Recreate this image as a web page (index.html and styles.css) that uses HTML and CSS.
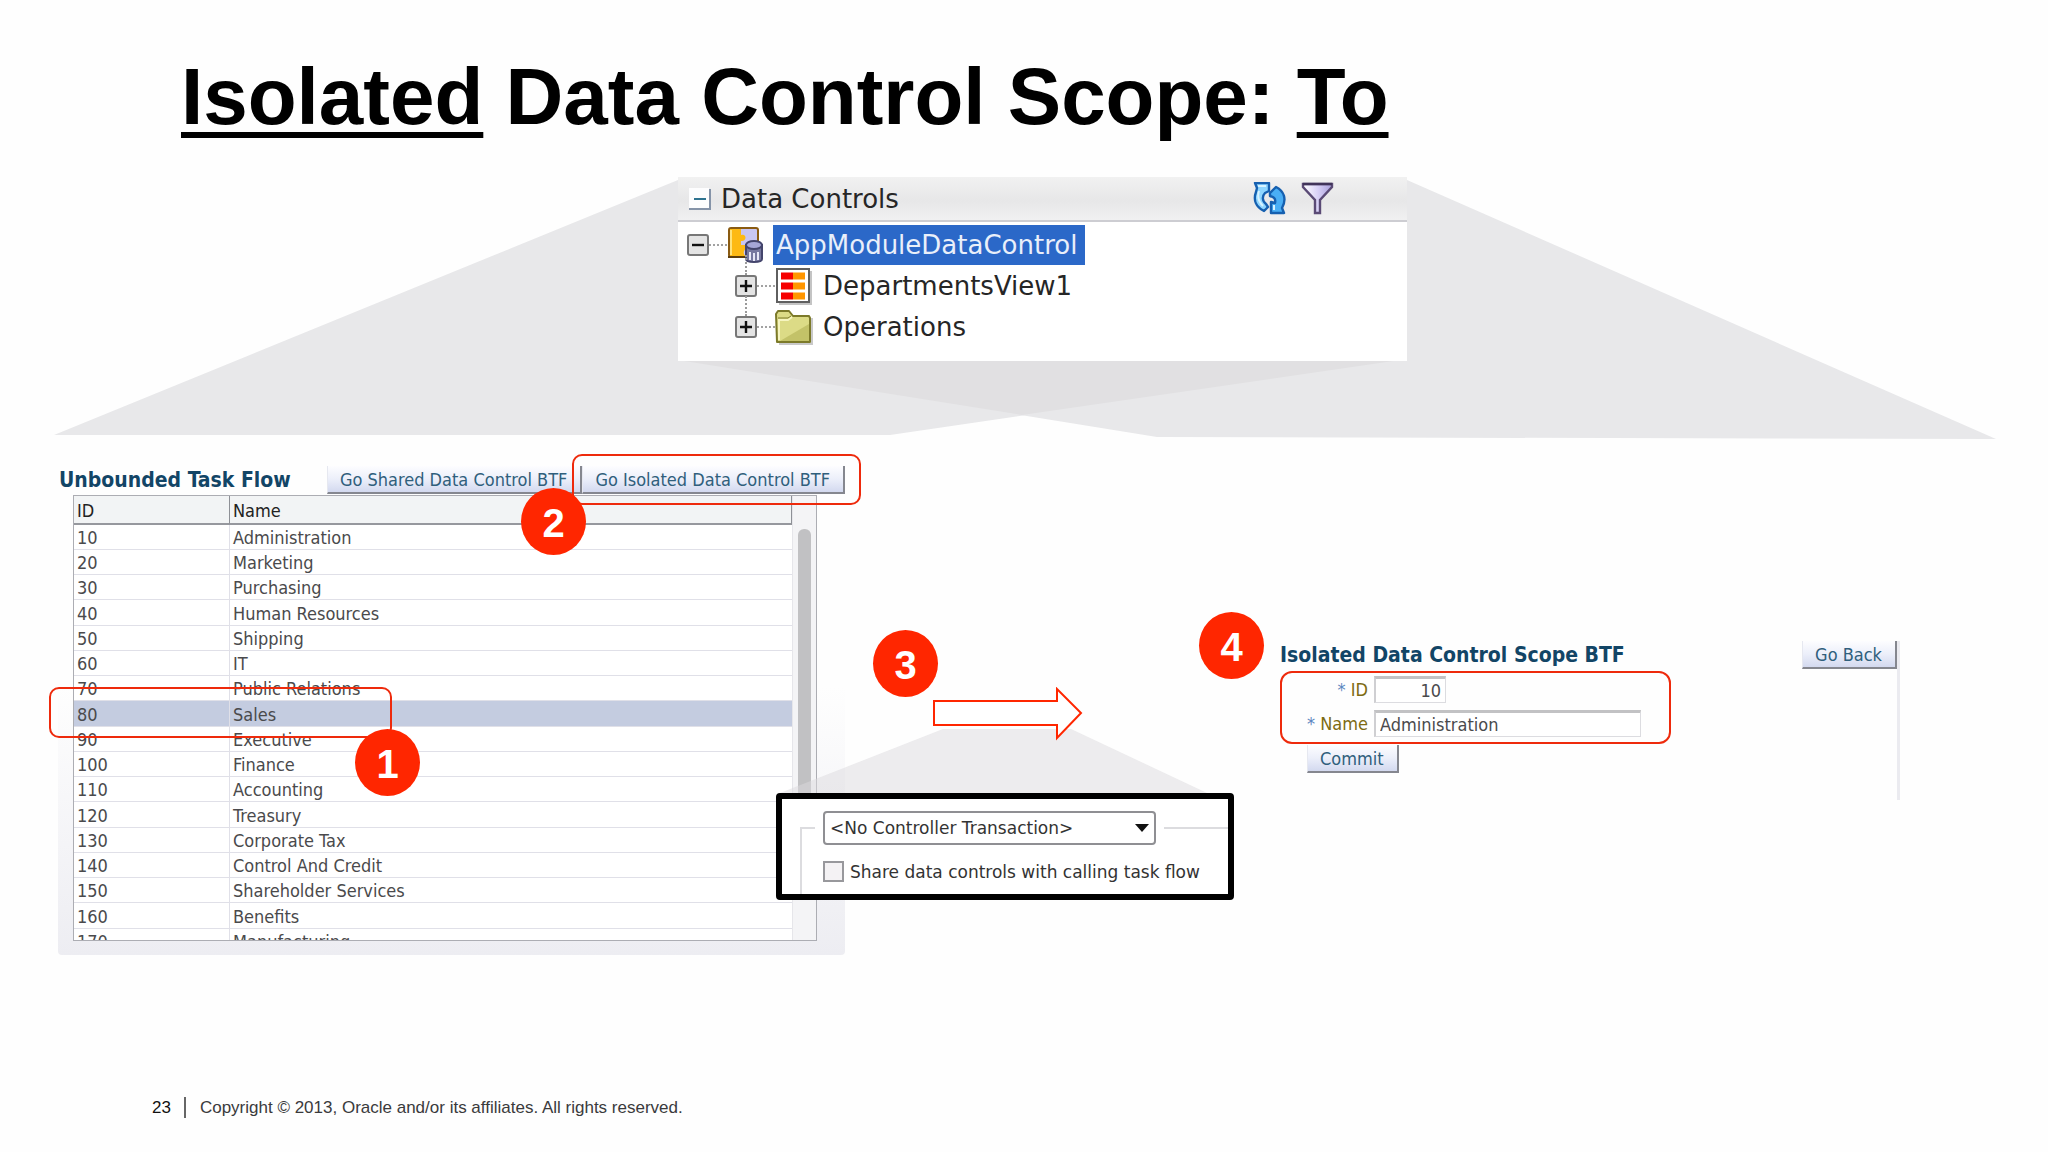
FILE: index.html
```html
<!DOCTYPE html>
<html lang="en">
<head>
<meta charset="utf-8">
<meta name="viewport" content="width=device-width, initial-scale=1">
<title>Isolated Data Control Scope: To</title>
<link rel="stylesheet" href="styles.css">
</head>
<body>
<h1 class="title"><u>Isolated</u> Data Control Scope: <u>To</u></h1>

<main class="stage">
  <svg class="beams" viewBox="0 0 2048 300" preserveAspectRatio="none" aria-hidden="true">
    <polygon points="678,37 54,292 890,292 1407,216 1407,37"/>
    <polygon points="1407,37 1996,296 1157,294 678,217 678,37"/>
    <polygon class="beam-overlap" points="678,217 1407,216 1022,272"/>
  </svg>

  <div class="source-row">
    <section class="controls">
      <header class="controls-head">
        <svg class="collapse" viewBox="0 0 22 22" aria-hidden="true">
          <rect width="20" height="20" fill="#fdfdfe"/>
          <path d="M0 21H21V1" fill="none" stroke="#8593a8" stroke-width="2"/>
          <path d="M5 11H17" stroke="#2f7390" stroke-width="2"/>
        </svg>
        <h2 class="controls-title">Data Controls</h2>
        <svg class="tool" viewBox="0 0 34 34" aria-hidden="true">
          <g fill="#8fd6ff" stroke="#1660b0" stroke-width="2.4" stroke-linejoin="round">
            <path d="M2 1H16V9L12 11C9 14 9 19 13 22L15 25L11 29C3 25 0 18 3 10L4 6Z"/>
            <path d="M17 11L23 5C31 9 34 17 29 26L31 31H18V20L22 21C23 17 21 15 17 14Z" fill="#4aaef5"/>
          </g>
          <path d="M5 4H13M6 9C4 15 6 20 10 24M21 23V28" fill="none" stroke="#d7f3ff" stroke-width="2"/>
        </svg>
        <svg class="tool" viewBox="0 0 34 34" aria-hidden="true">
          <defs><linearGradient id="cone"><stop offset="0" stop-color="#fff"/><stop offset=".5" stop-color="#d9d2f7"/><stop offset="1" stop-color="#a99fdc"/></linearGradient></defs>
          <path d="M2 2H31V5L19 18V31H14V18L2 5Z" fill="url(#cone)" stroke="#5a4a75" stroke-width="2.4"/>
          <path d="M2 2H31" stroke="#41345a" stroke-width="2.4"/>
        </svg>
      </header>
      <ul class="tree">
        <li class="node node-root">
          <svg class="toggle" viewBox="0 0 22 22" aria-hidden="true"><rect x="1" y="1" width="20" height="20" rx="2" fill="#e4e4e4" stroke="#777" stroke-width="2"/><path d="M5 11H17" stroke="#111" stroke-width="2.4"/></svg>
          <span class="dots"></span>
          <svg class="node-icon" viewBox="0 0 38 38" aria-hidden="true">
            <rect x="2" y="2" width="29" height="29" rx="2" fill="#c9c6f2" stroke="#8a5b12" stroke-width="2"/>
            <path d="M3 3H14V9C20 7 20 16 14 15V19H19V23C16 24 16 29 19 30H3Z" fill="#fdb913"/>
            <path d="M4 4V29" stroke="#ffe27a" stroke-width="2"/>
            <path d="M1 31H30" stroke="#5c3d0c" stroke-width="2"/>
            <path d="M19 19V33C19 37 35 37 35 33V19Z" fill="#77789f" stroke="#44456c" stroke-width="2"/>
            <ellipse cx="27" cy="19" rx="8" ry="4" fill="#a5a6d6" stroke="#44456c" stroke-width="2"/>
            <path d="M23 26V34M27 27V35M31 26V34" stroke="#e6e6f6" stroke-width="2"/>
          </svg>
          <span class="node-text selected">AppModuleDataControl</span>
        </li>
        <li class="node node-child">
          <svg class="toggle" viewBox="0 0 22 22" aria-hidden="true"><rect x="1" y="1" width="20" height="20" rx="2" fill="#e4e4e4" stroke="#777" stroke-width="2"/><path d="M5 11H17M11 5V17" stroke="#111" stroke-width="2.4"/></svg>
          <span class="dots"></span>
          <svg class="node-icon" viewBox="0 0 38 38" aria-hidden="true">
            <path d="M4 37H36V4" fill="none" stroke="#c4c4c4" stroke-width="2"/>
            <rect x="2" y="2" width="32" height="33" fill="#fff" stroke="#5f5f5f" stroke-width="2"/>
            <path d="M6 9H18M6 19H18M6 29H18" stroke="#f60000" stroke-width="7"/>
            <path d="M18 9H30M18 19H30M18 29H30" stroke="#ff9500" stroke-width="7"/>
          </svg>
          <span class="node-text">DepartmentsView1</span>
        </li>
        <li class="node node-child">
          <svg class="toggle" viewBox="0 0 22 22" aria-hidden="true"><rect x="1" y="1" width="20" height="20" rx="2" fill="#e4e4e4" stroke="#777" stroke-width="2"/><path d="M5 11H17M11 5V17" stroke="#111" stroke-width="2.4"/></svg>
          <span class="dots"></span>
          <svg class="node-icon" viewBox="0 0 38 38" aria-hidden="true">
            <path d="M4 36H37V10" fill="none" stroke="#c9c9c9" stroke-width="2"/>
            <path d="M1 6L3 3H14L18 8H34L35 10V34H2Z" fill="#dcdb86" stroke="#7c7a2a" stroke-width="2" stroke-linejoin="round"/>
            <path d="M5 33L34 16V33Z" fill="#c3c268"/>
            <path d="M3 12H13L17 9M4 13V32" fill="none" stroke="#f6f5c0" stroke-width="2"/>
            <path d="M3 10H13L16 8" fill="none" stroke="#7c7a2a"/>
          </svg>
          <span class="node-text">Operations</span>
        </li>
      </ul>
    </section>
  </div>

  <div class="flow-row">
    <section class="unbounded">
      <header class="panel-head">
        <h2 class="panel-title">Unbounded Task Flow</h2>
        <button class="btn" type="button">Go Shared Data Control BTF</button>
        <button class="btn" type="button">Go Isolated Data Control BTF</button>
        <span class="mark mark-button"></span>
        <span class="badge badge-two">2</span>
      </header>
      <div class="grid-box">
        <table class="grid">
          <thead><tr><th class="col-id" scope="col">ID</th><th scope="col">Name</th></tr></thead>
          <tbody>
            <tr><td>10</td><td>Administration</td></tr>
            <tr><td>20</td><td>Marketing</td></tr>
            <tr><td>30</td><td>Purchasing</td></tr>
            <tr><td>40</td><td>Human Resources</td></tr>
            <tr><td>50</td><td>Shipping</td></tr>
            <tr><td>60</td><td>IT</td></tr>
            <tr><td>70</td><td>Public Relations</td></tr>
            <tr class="current"><td>80</td><td>Sales</td></tr>
            <tr><td>90</td><td>Executive</td></tr>
            <tr><td>100</td><td>Finance</td></tr>
            <tr><td>110</td><td>Accounting</td></tr>
            <tr><td>120</td><td>Treasury</td></tr>
            <tr><td>130</td><td>Corporate Tax</td></tr>
            <tr><td>140</td><td>Control And Credit</td></tr>
            <tr><td>150</td><td>Shareholder Services</td></tr>
            <tr><td>160</td><td>Benefits</td></tr>
            <tr><td>170</td><td>Manufacturing</td></tr>
          </tbody>
        </table>
        <div class="scroll"><div class="thumb"></div></div>
      </div>
      <span class="mark mark-row"></span>
      <span class="badge badge-one">1</span>
    </section>

    <section class="step">
      <span class="badge badge-three">3</span>
      <svg class="arrow" viewBox="0 0 458 106" preserveAspectRatio="none" aria-hidden="true">
        <polygon points="167,42 295,42 431,106 4,106" fill="#dcdadd" fill-opacity=".5"/>
        <polygon points="158,14 281,14 281,2 305,26 281,51 281,38 158,38" fill="#fff" stroke="#ff2600" stroke-width="2"/>
      </svg>
      <form class="options">
        <fieldset class="group">
          <legend class="group-legend">
            <select class="transaction" aria-label="Transaction"><option>&lt;No Controller Transaction&gt;</option></select>
          </legend>
          <label class="share"><input class="check" type="checkbox">Share data controls with calling task flow</label>
        </fieldset>
      </form>
    </section>

    <section class="isolated">
      <header class="panel-head isolated-head">
        <h2 class="panel-title">Isolated Data Control Scope BTF</h2>
        <button class="btn" type="button">Go Back</button>
      </header>
      <form class="edit">
        <div class="fields">
          <label class="field-label" for="dept-id"><span class="star">*</span> ID</label>
          <input class="field field-id" id="dept-id" type="text" value="10">
          <label class="field-label" for="dept-name"><span class="star">*</span> Name</label>
          <input class="field" id="dept-name" type="text" value="Administration">
        </div>
        <button class="btn commit" type="button">Commit</button>
      </form>
      <span class="badge badge-four">4</span>
    </section>
  </div>
</main>

<footer class="foot">
  <span class="page">23</span>
  <span class="legal">Copyright © 2013, Oracle and/or its affiliates. All rights reserved.</span>
</footer>
</body>
</html>
```

FILE: styles.css
```css
* { box-sizing: border-box; }

body {
  margin: 0;
  min-height: 100vh;
  display: flex;
  flex-direction: column;
  background: #fefefe;
  font-family: "DejaVu Sans Condensed", "DejaVu Sans", sans-serif;
  font-size: 18px;
  color: #4a4a4c;
}

button, input, select { font: inherit; color: inherit; }

.title {
  margin: 0;
  padding: 51px 0 0 181px;
  font: bold 80px/92px "Liberation Sans", Arial, sans-serif;
  color: #000;
}

.title u {
  text-decoration-thickness: 6px;
  text-underline-offset: 8px;
  text-decoration-skip-ink: none;
}

.stage { position: relative; padding-top: 34px; }

/* Projection wedges behind the panels */
.beams {
  position: absolute;
  top: 0;
  left: 0;
  z-index: -1;
  width: 100%;
  height: 300px;
  fill: #e8e8ea;
}
.beam-overlap { fill: #e1e0e2; }

.source-row {
  display: grid;
  grid-template-columns: 678fr 729fr 641fr;
}

.controls {
  grid-column: 2;
  min-height: 184px;
  background: #fff;
  font-family: "DejaVu Sans", sans-serif;
  color: #262626;
}

.controls-head {
  display: flex;
  align-items: center;
  height: 45px;
  padding: 0 72px 0 11px;
  border-bottom: 2px solid #cdcdd2;
  background: linear-gradient(#f1f1f1, #e7e7e8 55%, #f0f0f1);
}

.collapse { width: 22px; height: 22px; margin-right: 10px; }
.controls-title { margin: 0 auto 0 0; font-size: 26px; font-weight: normal; }
.tool { width: 34px; height: 34px; margin-left: 14px; }

.tree { margin: 0; padding: 2px 0 0 9px; list-style: none; }

.node { position: relative; display: flex; align-items: center; height: 41px; }
.node-child { padding-left: 48px; }
.node-child::before {
  content: "";
  position: absolute;
  left: 58px;
  top: -10px;
  height: 20px;
  border-left: 2px dotted #9a9a9a;
}
.toggle { width: 22px; height: 22px; }
.dots { width: 18px; border-top: 2px dotted #a2a2a2; }
.node-icon { width: 38px; height: 38px; margin-right: 8px; }
.node-child .node-icon { margin-right: 10px; }
.node-text { font-size: 26px; line-height: 40px; }
.selected { padding: 0 8px 0 3px; background: #2b68c8; color: #e9effa; }

/* Columns overlap: the option box sits across the edge of the table */
.flow-row {
  display: grid;
  grid-template-columns: 58fr 718fr 69fr 389fr 46fr 620fr 148fr;
  align-items: start;
  margin-top: 93px;
}

.unbounded {
  position: relative;
  grid-column: 2 / 4;
  grid-row: 1;
  margin-top: 12px;
  padding-bottom: 14px;
  border-radius: 4px;
  background: linear-gradient(#fefefe 45%, #ededf2);
}

.panel-head { position: relative; display: flex; height: 29px; padding-left: 1px; }
.panel-title {
  margin: 0 auto 0 0;
  font-size: 21px;
  line-height: 29px;
  color: #124566;
}

.btn {
  height: 28px;
  padding: 0 13px 0 12px;
  border: 0;
  border-right: 2px solid #85878f;
  border-bottom: 2px solid #85878f;
  border-left: 1px solid #e6e8f0;
  background: linear-gradient(#fdfdff, #eceffa 50%, #d3d9ef);
  color: #305f7c;
  white-space: nowrap;
}

.grid-box {
  display: flex;
  height: 446px;
  margin: 0 28px 0 15px;
  border: 1px solid #acadb3;
  overflow: hidden;
  background: #fff;
}

.grid { flex: 1; border-spacing: 0; table-layout: fixed; height: max-content; }
.grid th, .grid td { padding: 1px 3px 0; text-align: left; white-space: nowrap; }
.grid th {
  height: 29px;
  border-right: 1px solid #8e9096;
  border-bottom: 2px solid #96989e;
  background: #f2f4f5;
  font-weight: normal;
  color: #222;
}
.col-id { width: 156px; }
.grid td { height: 25px; border-bottom: 1px solid #e0e0e8; line-height: 23px; }
.grid tr:nth-child(4n) td { height: 26px; }
.grid td:first-child { border-right: 1px solid #e0e0e8; }
.current td { background: #c4cce0; }

.scroll { width: 24px; padding: 33px 5px 0; border-left: 1px solid #e6e6ea; background: #f4f4f6; }
.thumb { height: 340px; border-radius: 6px; background: #c1c1c3; }

/* Numbered callouts */
.mark { position: absolute; border: 2px solid #ee2a0c; border-radius: 10px; }
.mark-button { top: -12px; right: -16px; width: 289px; height: 51px; }
.mark-row { top: 221px; left: -9px; width: 343px; height: 51px; }

.badge {
  display: flex;
  align-items: center;
  justify-content: center;
  width: 65px;
  height: 67px;
  padding-top: 2px;
  border-radius: 50%;
  background: #ff2600;
  color: #fff;
  font: bold 40px/1 "Liberation Sans", Arial, sans-serif;
}
.badge-one { position: absolute; top: 263px; left: 297px; }
.badge-two { position: absolute; top: 22px; right: 259px; }
.badge-three { margin-left: 97px; }
.badge-four { position: absolute; top: -29px; left: -81px; }

.step { position: relative; grid-column: 3 / 5; grid-row: 1; margin-top: 176px; }
.arrow { display: block; width: 100%; height: 106px; margin-top: -10px; }

.options {
  height: 107px;
  padding: 12px 0 0 18px;
  border: 6px solid #000;
  border-radius: 4px;
  overflow: hidden;
  background: #fff;
  font-family: "DejaVu Sans", sans-serif;
  font-size: 17px;
  color: #333;
}
.group {
  min-width: 0;
  height: 100px;
  margin: 0;
  padding: 16px 0 0 21px;
  border: 2px solid #dcdcdf;
  border-right: 0;
}
.group-legend { margin-left: -8px; padding: 0 8px; }
.transaction {
  appearance: none;
  display: block;
  width: 333px;
  height: 34px;
  padding: 0 5px;
  border: 2px solid #8f8f93;
  border-radius: 4px;
  background: #fff url("data:image/svg+xml,%3Csvg xmlns='http://www.w3.org/2000/svg' width='14' height='8'%3E%3Cpath d='M0 0H14L7 8Z' fill='%23111'/%3E%3C/svg%3E") no-repeat right 5px center / 14px 8px;
}
.share { display: flex; align-items: center; gap: 6px; white-space: nowrap; }
.check {
  appearance: none;
  flex: none;
  width: 21px;
  height: 21px;
  margin: 0;
  border: 2px solid #98989c;
  background: #f4f2f4;
}

.isolated {
  position: relative;
  grid-column: 6;
  grid-row: 1;
  min-height: 159px;
  margin-top: 187px;
  border-right: 3px solid #ebebf0;
}
.isolated-head { height: 30px; padding-left: 0; }

.fields {
  display: grid;
  grid-template-columns: 86px 267px;
  grid-auto-rows: 27px;
  gap: 7px 6px;
  width: 391px;
  height: 73px;
  padding: 3px 0 0;
  border: 2px solid #ee2a0c;
  border-radius: 12px;
}
.field-label { text-align: right; line-height: 27px; color: #7d6b12; }
.star { color: #5b86c0; }
.field {
  width: 100%;
  height: 27px;
  padding: 0 4px;
  border: 1px solid #dcdce0;
  border-top: 3px solid #c2c2c4;
  border-left: 2px solid #cfcfd2;
  background: #fff;
  line-height: 20px;
}
.field-id { width: 72px; text-align: right; }
.commit { display: block; margin: 1px 0 0 27px; }

.foot {
  display: flex;
  align-items: center;
  margin-top: auto;
  padding: 0 0 34px 152px;
  font: 17px/21px "Liberation Sans", Arial, sans-serif;
  color: #3a3a3c;
}
.page { padding-right: 13px; border-right: 2px solid #666; color: #111; }
.legal { padding-left: 14px; }
```
